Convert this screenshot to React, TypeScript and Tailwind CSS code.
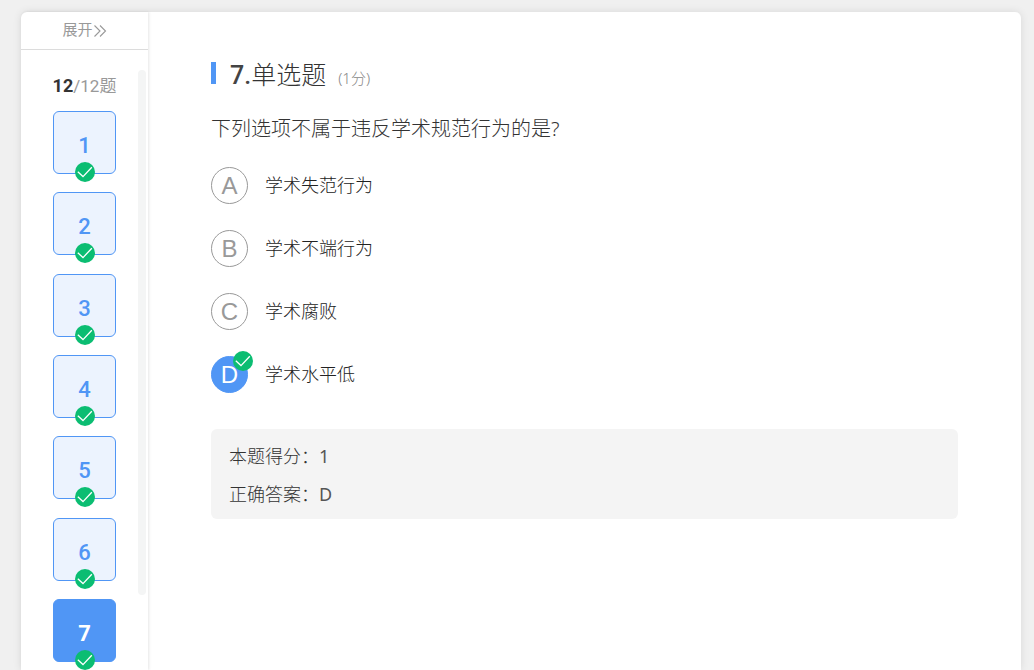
import { useState } from "react";

const total = 12;

const options = [
  { key: "A", text: "学术失范行为" },
  { key: "B", text: "学术不端行为" },
  { key: "C", text: "学术腐败" },
  { key: "D", text: "学术水平低" },
];

const CheckBadge = ({ className }: { className: string }) => (
  <svg viewBox="0 0 20 20" className={`absolute size-5 ${className}`}>
    <circle cx="10" cy="10" r="10" fill="#0bbd72" />
    <path
      d="M2.8 9.8 L8 14.6 L16.8 5.2"
      fill="none"
      stroke="#fff"
      strokeWidth="1.3"
    />
  </svg>
);

const Sidebar = ({
  current,
  onSelect,
}: {
  current: number;
  onSelect: (n: number) => void;
}) => (
  <aside className="flex w-[127px] shrink-0 flex-col rounded-tl-md shadow-[1px_0_3px_rgba(0,0,0,0.1)]">
    <button
      type="button"
      className="flex h-[38px] shrink-0 items-center justify-center border-b border-[#dcdcdc] text-[15px] text-[#999]"
    >
      展开
      <svg viewBox="0 0 14 12" className="h-3 w-3.5">
        <path
          d="M1.5 0.5 L7 6 L1.5 11.5 M7 0.5 L12.5 6 L7 11.5"
          fill="none"
          stroke="#999"
          strokeWidth="1.1"
        />
      </svg>
    </button>
    <div className="relative min-h-0 flex-1">
      <div className="h-full overflow-y-auto pt-5 [scrollbar-width:none]">
        <p className="h-8 text-center text-[17px] leading-8 text-[#999]">
          <span className="text-lg font-bold text-[#333]">12</span>/{total}题
        </p>
        <div className="mx-auto mt-[9px] flex h-[958px] w-[63px] flex-col justify-between">
          {Array.from({ length: total }, (_, i) => i + 1).map((n) => (
            <button
              key={n}
              type="button"
              onClick={() => onSelect(n)}
              className={`relative h-[63px] w-full rounded-md border border-[#5096f5] pt-1.5 text-[22px] ${
                n === current
                  ? "bg-[#5096f5] font-bold text-white"
                  : "bg-[#ecf3fe] font-medium text-[#5096f5]"
              }`}
            >
              {n}
              <CheckBadge className="-bottom-[9px] left-[21px]" />
            </button>
          ))}
        </div>
      </div>
      <div className="absolute top-5 right-0.5 h-[525px] w-2 rounded-full bg-[#f4f5f5]" />
    </div>
  </aside>
);

const App = () => {
  const [current, setCurrent] = useState(7);
  const [answer, setAnswer] = useState("D");

  return (
    <div className="h-screen overflow-hidden bg-[#f0f0f0] pt-3 pr-[13px] pl-[21px] font-[Roboto,'Noto_Sans_CJK_SC',sans-serif]">
      <div className="flex h-full rounded-t-md bg-white shadow-[0_0_8px_rgba(0,0,0,0.1)]">
        <Sidebar current={current} onSelect={setCurrent} />

        <main className="flex-1 pt-11 pr-[63px] pl-[63px] font-light text-[#333]">
          <div className="flex items-center">
            <span className="mb-1.5 h-[22px] w-[5px] bg-[#5096f5]" />
            <h1 className="ml-3.5 text-[25px] leading-10">
              <span className="font-medium text-[#444]">{current}.</span>单选题
            </h1>
            <span className="ml-3 pt-1 font-['Noto_Sans','Noto_Sans_CJK_SC',sans-serif] text-[15px] text-[#888]">
              (1分)
            </span>
          </div>

          <p className="mt-[17px] font-['Noto_Sans','Noto_Sans_CJK_SC',sans-serif] text-xl leading-8">
            下列选项不属于违反学术规范行为的是?
          </p>

          <div className="mt-[22px] flex flex-col gap-[26px]">
            {options.map(({ key, text }) => (
              <label key={key} className="flex cursor-pointer items-center">
                <input
                  type="radio"
                  name="answer"
                  value={key}
                  checked={answer === key}
                  onChange={() => setAnswer(key)}
                  className="sr-only"
                />
                <span
                  className={`relative flex size-[37px] items-center justify-center rounded-full border font-['Liberation_Sans',sans-serif] text-2xl font-normal ${
                    answer === key
                      ? "border-[#5096f5] bg-[#5096f5] text-white"
                      : "border-[#999] text-[#999]"
                  }`}
                >
                  {key}
                  {answer === key && <CheckBadge className="-top-1.5 left-[21px]" />}
                </span>
                <span className="ml-[17px] text-lg text-[#222]">{text}</span>
              </label>
            ))}
          </div>

          <div className="mt-9 rounded-md bg-[#f4f4f4] px-[18px] pt-2 pb-1.5 font-['Noto_Sans','Noto_Sans_CJK_SC',sans-serif] text-lg leading-[38px]">
            <p>
              本题得分：<span className="font-normal text-[#555]">1</span>
            </p>
            <p>
              正确答案：<span className="font-normal text-[#555]">D</span>
            </p>
          </div>
        </main>
      </div>
    </div>
  );
};

export default App;
